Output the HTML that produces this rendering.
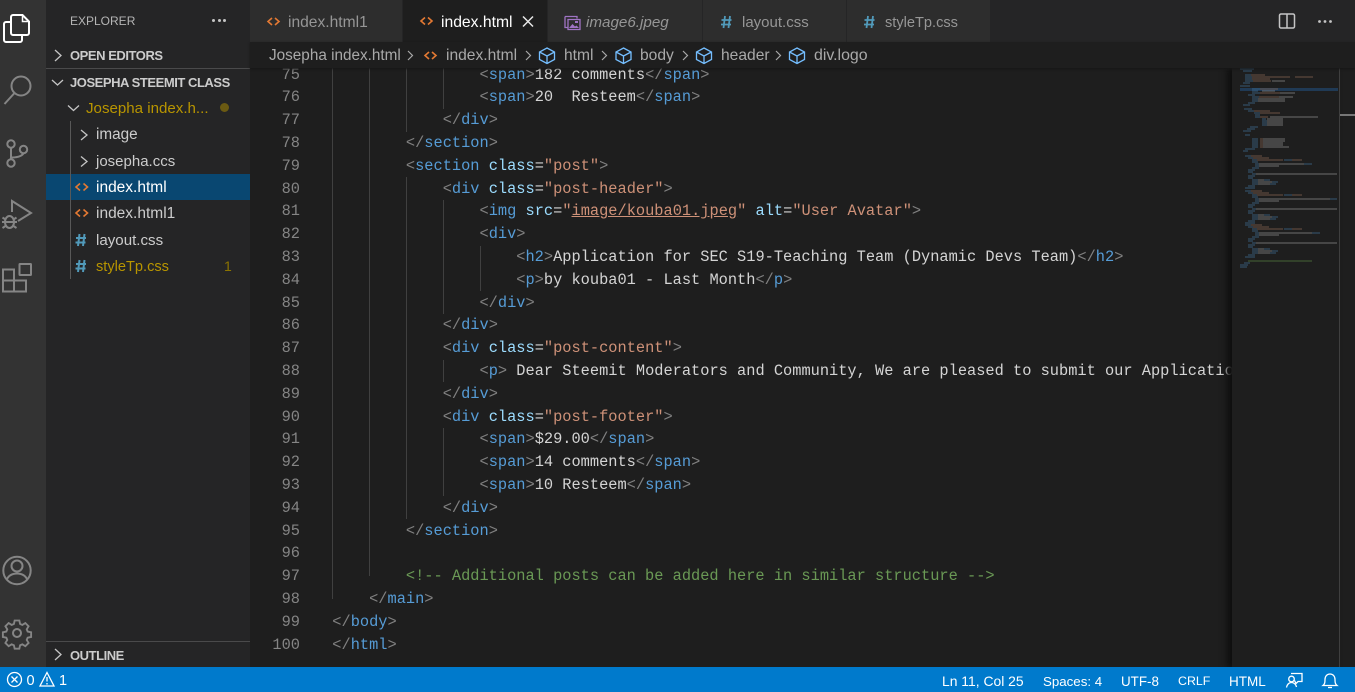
<!DOCTYPE html>
<html lang="en"><head><meta charset="utf-8"><title>index.html</title>
<style>
*{margin:0;padding:0;box-sizing:border-box}
html,body{width:1355px;height:692px;overflow:hidden;background:#1e1e1e}
body{position:relative;font-family:"Liberation Sans",sans-serif;color:#ccc}
.a{position:absolute;white-space:pre}
.box{position:absolute}
svg{position:absolute;overflow:visible}
#code,#nums{font-family:"Liberation Mono",monospace;font-size:15.33px;line-height:22.8px;white-space:pre}
#code{position:absolute;left:332.3px;top:63.6px;color:#d4d4d4}
#nums{position:absolute;left:250px;width:50px;top:63.6px;text-align:right;color:#858585}
#code div,#nums div{height:22.8px}
i{font-style:normal}
.b{color:#808080}.t{color:#569cd6}.n{color:#9cdcfe}.s{color:#ce9178}.c{color:#6a9955}
.g{position:absolute;width:1px;background:#404040}
.side{font-size:15.3px;line-height:26px;height:26px}
.head{font-size:13px;letter-spacing:-.45px;font-weight:bold;line-height:20px;color:#cccccc}
.tab{position:absolute;top:0;height:42px}
.tl{font-size:15.6px;line-height:42px;top:2px;color:#969696}
.st{font-size:13.7px;line-height:25px;top:669px;color:#fff}
.cr{font-size:15.6px;line-height:26px;top:43px;color:#a9a9a9}
</style></head>
<body>
<!-- editor -->
<div class="box" style="left:250px;top:42px;width:1105px;height:626px;background:#1e1e1e"></div>
<div class="g" style="left:332px;top:64px;height:535px"></div>
<div class="g" style="left:369px;top:64px;height:512px"></div>
<div class="g" style="left:406px;top:64px;height:68px"></div>
<div class="g" style="left:406px;top:177px;height:342px"></div>
<div class="g" style="left:443px;top:64px;height:45px"></div>
<div class="g" style="left:443px;top:200px;height:114px"></div>
<div class="g" style="left:443px;top:360px;height:22px"></div>
<div class="g" style="left:443px;top:428px;height:68px"></div>
<div class="g" style="left:480px;top:246px;height:45px"></div>
<div id="nums"><div>75</div><div>76</div><div>77</div><div>78</div><div>79</div><div>80</div><div>81</div><div>82</div><div>83</div><div>84</div><div>85</div><div>86</div><div>87</div><div>88</div><div>89</div><div>90</div><div>91</div><div>92</div><div>93</div><div>94</div><div>95</div><div>96</div><div>97</div><div>98</div><div>99</div><div>100</div></div>
<div id="code" style="width:900px;height:600px;overflow:hidden"><div>                <i class="b">&lt;</i><i class="t">span</i><i class="b">&gt;</i>182 comments<i class="b">&lt;/</i><i class="t">span</i><i class="b">&gt;</i></div><div>                <i class="b">&lt;</i><i class="t">span</i><i class="b">&gt;</i>20  Resteem<i class="b">&lt;/</i><i class="t">span</i><i class="b">&gt;</i></div><div>            <i class="b">&lt;/</i><i class="t">div</i><i class="b">&gt;</i></div><div>        <i class="b">&lt;/</i><i class="t">section</i><i class="b">&gt;</i></div><div>        <i class="b">&lt;</i><i class="t">section</i> <i class="n">class</i>=<i class="s">"post"</i><i class="b">&gt;</i></div><div>            <i class="b">&lt;</i><i class="t">div</i> <i class="n">class</i>=<i class="s">"post-header"</i><i class="b">&gt;</i></div><div>                <i class="b">&lt;</i><i class="t">img</i> <i class="n">src</i>=<i class="s">"<u>image/kouba01.jpeg</u>"</i> <i class="n">alt</i>=<i class="s">"User Avatar"</i><i class="b">&gt;</i></div><div>                <i class="b">&lt;</i><i class="t">div</i><i class="b">&gt;</i></div><div>                    <i class="b">&lt;</i><i class="t">h2</i><i class="b">&gt;</i>Application for SEC S19-Teaching Team (Dynamic Devs Team)<i class="b">&lt;/</i><i class="t">h2</i><i class="b">&gt;</i></div><div>                    <i class="b">&lt;</i><i class="t">p</i><i class="b">&gt;</i>by kouba01 - Last Month<i class="b">&lt;/</i><i class="t">p</i><i class="b">&gt;</i></div><div>                <i class="b">&lt;/</i><i class="t">div</i><i class="b">&gt;</i></div><div>            <i class="b">&lt;/</i><i class="t">div</i><i class="b">&gt;</i></div><div>            <i class="b">&lt;</i><i class="t">div</i> <i class="n">class</i>=<i class="s">"post-content"</i><i class="b">&gt;</i></div><div>                <i class="b">&lt;</i><i class="t">p</i><i class="b">&gt;</i> Dear Steemit Moderators and Community, We are pleased to submit our Application</div><div>            <i class="b">&lt;/</i><i class="t">div</i><i class="b">&gt;</i></div><div>            <i class="b">&lt;</i><i class="t">div</i> <i class="n">class</i>=<i class="s">"post-footer"</i><i class="b">&gt;</i></div><div>                <i class="b">&lt;</i><i class="t">span</i><i class="b">&gt;</i>$29.00<i class="b">&lt;/</i><i class="t">span</i><i class="b">&gt;</i></div><div>                <i class="b">&lt;</i><i class="t">span</i><i class="b">&gt;</i>14 comments<i class="b">&lt;/</i><i class="t">span</i><i class="b">&gt;</i></div><div>                <i class="b">&lt;</i><i class="t">span</i><i class="b">&gt;</i>10 Resteem<i class="b">&lt;/</i><i class="t">span</i><i class="b">&gt;</i></div><div>            <i class="b">&lt;/</i><i class="t">div</i><i class="b">&gt;</i></div><div>        <i class="b">&lt;/</i><i class="t">section</i><i class="b">&gt;</i></div><div> </div><div>        <i class="c">&lt;!-- Additional posts can be added here in similar structure --&gt;</i></div><div>    <i class="b">&lt;/</i><i class="t">main</i><i class="b">&gt;</i></div><div><i class="b">&lt;/</i><i class="t">body</i><i class="b">&gt;</i></div><div><i class="b">&lt;/</i><i class="t">html</i><i class="b">&gt;</i></div></div>

<!-- minimap -->
<div class="box" style="left:1232px;top:68px;width:107px;height:600px;background:#1e1e1e;box-shadow:-5px 0 6px #0f0f0f"></div>
<div class="box" style="left:1240px;top:88px;width:98px;height:3px;background:#203a55"></div>
<div class="box" style="left:1339px;top:68px;width:1px;height:600px;background:#3f3f3f"></div>
<div class="box" style="left:1340px;top:114px;width:15px;height:2px;background:#777"></div>
<svg width="1355" height="692" style="left:0;top:0;opacity:.72" fill="none" stroke-width="1.100">
<path stroke="#3f6f96" d="M1240 69h14M1243 71h9M1245 75h6M1245 77h7M1245 79h7M1245 81h8M1243 83h7M1240 86h10M1252 89h8M1252 91h6M1252 93h8M1248 95h7M1252 97h7M1252 99h6M1252 101h6M1248 103h7M1243 105h7M1244 109h8M1248 111h6M1254 113h6M1255 115h5M1255 117h5M1262 119h4M1262 121h5M1262 123h5M1262 125h5M1250 127h8M1247 129h8M1243 131h8M1245 135h5M1252 139h6M1252 141h6M1252 143h6M1252 145h6M1252 147h6M1245 149h10M1243 151h5"/>
<path stroke="#8a6553" d="M1251 75h14M1252 77h38M1295 77h18M1252 79h18M1253 81h18M1260 89h18M1260 93h20M1259 97h20M1254 111h16M1260 113h20M1260 117h8M1260 139h3M1260 141h3M1260 143h3M1260 145h3M1260 147h3"/>
<path stroke="#8f8f8f" d="M1272 81h13M1262 91h13M1280 93h15M1279 97h14M1258 99h27M1258 101h27M1270 117h48M1267 119h16M1267 121h16M1267 123h16M1267 125h16M1263 139h22M1263 141h22M1263 143h20M1263 145h20M1263 147h26"/>
<g transform="translate(0 155)"><path stroke="#3f6f96" d="M1245 1h6M1248 3h5M1252 5h5M1284 5h8M1252 7h6M1255 9h4M1304 9h8M1255 11h4M1252 13h7M1248 15h7M1248 17h5M1252 19h4M1248 21h7M1248 23h5M1252 25h6M1264 25h6M1252 27h6M1272 27h6M1252 29h6M1270 29h6M1248 31h7M1245 33h10"/><path stroke="#8a6553" d="M1251 1h11M1253 3h16M1257 5h26M1292 5h10"/><path stroke="#8f8f8f" d="M1259 9h45M1259 11h20M1256 19h81M1258 25h6M1258 27h14M1258 29h12"/></g>
<g transform="translate(0 190)"><path stroke="#3f6f96" d="M1245 1h6M1248 3h5M1252 5h5M1284 5h8M1252 7h6M1255 9h4M1330 9h7M1255 11h4M1252 13h7M1248 15h7M1248 17h5M1252 19h4M1248 21h7M1248 23h5M1252 25h6M1264 25h6M1252 27h6M1272 27h6M1252 29h6M1270 29h6M1248 31h7M1245 33h10"/><path stroke="#8a6553" d="M1251 1h11M1253 3h16M1257 5h26M1292 5h10"/><path stroke="#8f8f8f" d="M1259 9h71M1259 11h20M1256 19h81M1258 25h6M1258 27h14M1258 29h12"/></g>
<g transform="translate(0 224)"><path stroke="#3f6f96" d="M1245 1h6M1248 3h5M1252 5h5M1284 5h8M1252 7h6M1255 9h4M1312 9h8M1255 11h4M1252 13h7M1248 15h7M1248 17h5M1252 19h4M1248 21h7M1248 23h5M1252 25h6M1264 25h6M1252 27h6M1272 27h6M1252 29h6M1270 29h6M1248 31h7M1245 33h10"/><path stroke="#8a6553" d="M1251 1h11M1253 3h16M1257 5h26M1292 5h10"/><path stroke="#8f8f8f" d="M1259 9h53M1259 11h20M1256 19h81M1258 25h6M1258 27h14M1258 29h12"/></g>
<path stroke="#55803f" d="M1248 261h64"/>
<path stroke="#3f6f96" d="M1244 263h6M1240 265h8M1240 267h7"/>
</svg>

<!-- activity bar -->
<div class="box" style="left:0;top:0;width:46px;height:668px;background:#333"></div>
<svg width="46" height="668" style="left:0;top:0" fill="none">
<path stroke="#fff" stroke-width="2" d="M22 35v5a2 2 0 0 1-2 2H6a2 2 0 0 1-2-2V24a2 2 0 0 1 2-2h5"/>
<path stroke="#fff" stroke-width="2" d="M13 15h9.500L29 21.500V33a2 2 0 0 1-2 2H13a2 2 0 0 1-2-2V17a2 2 0 0 1 2-2z"/>
<path stroke="#fff" stroke-width="1.500" d="M22.500 15v6.500H29"/>
<g stroke="#858585" stroke-width="2">
<circle cx="21" cy="86" r="9.500"/><path d="M14.500 93 4.500 104"/>
<circle cx="11" cy="144" r="3.700"/><circle cx="11" cy="163" r="3.700"/><circle cx="23.500" cy="149.500" r="3.700"/>
<path d="M11 148v11.500M11.500 157.500c8 0 11.500-2.500 12-4.500"/>
<path d="M12 212v-11L31 213 18 221"/>
<ellipse cx="9.500" cy="222" rx="4.500" ry="6"/><path d="M2.500 217.500l3 2M16.500 217.500l-3 2M2 222h3M14 222h3M2.500 228l3-2M16.500 228l-3-2M5.500 222h8"/>
<path d="M3 269.500h11v22H3zM3 280.500h23v11H14M26 280.500v-1M14 269.500v22"/>
<path d="M26 280.500v11"/>
<rect x="19.500" y="264" width="11.500" height="11" rx=".5"/>
<circle cx="17" cy="570.500" r="13.700"/><circle cx="17" cy="566" r="5.500"/><path d="M6.500 580c2-4.500 6-6.500 10.500-6.500s8.500 2 10.500 6.500"/>
<circle cx="17" cy="633" r="4"/>
<path transform="translate(1.100 40.800) scale(.935)" d="M14.500 620h5l.8 3.700 2.400 1 3.200-2 3.500 3.500-2 3.200 1 2.400 3.700.8v5l-3.700.8-1 2.400 2 3.200-3.500 3.500-3.200-2-2.400 1-.8 3.700h-5l-.8-3.700-2.400-1-3.200 2-3.500-3.500 2-3.200-1-2.400-3.700-.8v-5l3.700-.8 1-2.400-2-3.200 3.500-3.500 3.200 2 2.400-1z"/>
</g>
</svg>

<!-- sidebar -->
<div class="box" style="left:46px;top:0;width:204px;height:668px;background:#252526"></div>
<div class="a" style="left:70px;top:12px;font-size:12px;line-height:18px;color:#b5b5b5">EXPLORER</div>
<div class="box" style="left:212px;top:19px;width:3px;height:3px;background:#c5c5c5;border-radius:2px"></div>
<div class="box" style="left:217.500px;top:19px;width:3px;height:3px;background:#c5c5c5;border-radius:2px"></div>
<div class="box" style="left:223px;top:19px;width:3px;height:3px;background:#c5c5c5;border-radius:2px"></div>
<div class="a head" style="left:70px;top:46px">OPEN EDITORS</div>
<div class="box" style="left:46px;top:68px;width:204px;height:1px;background:#4a4a4b"></div>
<div class="a head" style="left:70px;top:73px">JOSEPHA STEEMIT CLASS</div>
<div class="a side" style="left:86px;top:96px;color:#b89500;font-size:15.1px">Josepha index.h...</div>
<div class="box" style="left:220px;top:103px;width:9px;height:9px;border-radius:50%;background:#6b5a12"></div>
<div class="box" style="left:46px;top:174px;width:204px;height:26px;background:#094771"></div>
<div class="box" style="left:70px;top:121px;width:1px;height:158px;background:#585858"></div>
<div class="a side" style="left:96px;top:122px">image</div>
<div class="a side" style="left:96px;top:149px;font-size:15px">josepha.ccs</div>
<div class="a side" style="left:96px;top:175px;color:#fff;font-size:15.5px">index.html</div>
<div class="a side" style="left:96px;top:201px;font-size:15.5px">index.html1</div>
<div class="a side" style="left:96px;top:228px;font-size:15.1px">layout.css</div>
<div class="a side" style="left:96px;top:254px;color:#b89500;font-size:14.6px">styleTp.css</div>
<div class="a side" style="left:224px;top:253px;font-size:14px;color:#8c7400">1</div>
<div class="box" style="left:46px;top:641px;width:204px;height:1px;background:#4a4a4b"></div>
<div class="a head" style="left:70px;top:646px">OUTLINE</div>
<svg width="250" height="668" style="left:0;top:0" fill="none" stroke-width="1.300">
<g stroke="#c5c5c5">
<path d="M55 50l6 5.500-6 5.500M52 80l5.500 5 5.500-5M68 105.500l5.500 5 5.500-5M81 130l6 5-6 5M81 156.500l6 5-6 5M55 649l6 5.500-6 5.500"/>
</g>
<g stroke="#e37933" stroke-width="1.600"><path d="M80 183.500l-4 3.500 4 3.500M83.500 183.500l4 3.500-4 3.500M80 209.500l-4 3.500 4 3.500M83.500 209.500l4 3.500-4 3.500"/></g>
<g stroke="#519aba" stroke-width="2"><path d="M79.500 234l-1.500 12M84.500 234l-1.500 12M76 238h10M75.500 242.500h10M79.500 260l-1.500 12M84.500 260l-1.500 12M76 264h10M75.500 268.500h10"/></g>
</svg>

<!-- tabs -->
<div class="box" style="left:250px;top:0;width:1105px;height:42px;background:#252526"></div>
<div class="tab" style="left:250px;width:152px;background:#2d2d2d"></div>
<div class="tab" style="left:403px;width:144px;background:#1e1e1e"></div>
<div class="tab" style="left:548px;width:154px;background:#2d2d2d"></div>
<div class="tab" style="left:703px;width:143px;background:#2d2d2d"></div>
<div class="tab" style="left:847px;width:143px;background:#2d2d2d"></div>
<div class="a tl" style="left:288px">index.html1</div>
<div class="a tl" style="left:441px;color:#fff;font-size:15.7px">index.html</div>
<div class="a tl" style="left:586px;font-style:italic;font-size:15.2px">image6.jpeg</div>
<div class="a tl" style="left:742px;font-size:15px">layout.css</div>
<div class="a tl" style="left:885px;font-size:14.6px">styleTp.css</div>
<svg width="1355" height="42" style="left:0;top:0" fill="none">
<g stroke="#e37933" stroke-width="1.600"><path d="M272 18l-4 3.500 4 3.500M275 18l4 3.500-4 3.500M425 17.500l-4 3.500 4 3.500M428 17.500l4 3.500-4 3.500"/></g>
<path stroke="#e8e8e8" stroke-width="1.500" d="M523 16.500l10 10M533 16.500l-10 10"/>
<path stroke="#a074c4" stroke-width="1.300" d="M565 16.500h12v2M565 16.500v11h3M568 19.500h12v10h-12z"/>
<path fill="#a074c4" d="M569 28l3.500-4 2.500 2.500 1.500-1 2.500 2.500zM575 21h3v2h-3z"/>
<g stroke="#519aba" stroke-width="1.800"><path d="M725 16l-1.500 12M730 16l-1.500 12M721.500 20h10M721 24.500h10M868 16l-1.500 12M873 16l-1.500 12M864.500 20h10M864 24.500h10"/></g>
<rect x="1279.500" y="14" width="15" height="14" rx="1.500" stroke="#c5c5c5" stroke-width="1.500"/><path stroke="#c5c5c5" stroke-width="1.500" d="M1287 14v14"/>
<g fill="#c5c5c5"><circle cx="1319.500" cy="21.500" r="1.400"/><circle cx="1325" cy="21.500" r="1.400"/><circle cx="1330.500" cy="21.500" r="1.400"/></g>
</svg>

<!-- breadcrumb -->
<div class="box" style="left:250px;top:42px;width:1105px;height:26px;background:#1e1e1e;box-shadow:0 1px 2px #161616"></div>
<div class="a cr" style="left:269px;font-size:15.3px">Josepha index.html</div>
<div class="a cr" style="left:446px">index.html</div>
<div class="a cr" style="left:564px">html</div>
<div class="a cr" style="left:640px">body</div>
<div class="a cr" style="left:721px">header</div>
<div class="a cr" style="left:814px;font-size:15.9px">div.logo</div>
<svg width="1355" height="70" style="left:0;top:0" fill="none">
<path stroke="#a9a9a9" stroke-width="1.200" d="M408 51l4.500 4.500-4.500 4.500M526 51l4.500 4.500-4.500 4.500M602 51l4.500 4.500-4.500 4.500M683 51l4.500 4.500-4.500 4.500M776 51l4.500 4.500-4.500 4.500"/>
<g stroke="#e37933" stroke-width="1.600"><path d="M429 52l-4 3.500 4 3.500M432 52l4 3.500-4 3.500"/></g>
<g stroke="#75beff" stroke-width="1.300">
<path d="M547 48l7.500 4v7.500l-7.500 4-7.500-4V52zM539.500 52l7.500 4 7.500-4M547 56v7.500"/>
<path transform="translate(76.500 0)" d="M547 48l7.500 4v7.500l-7.500 4-7.500-4V52zM539.500 52l7.500 4 7.500-4M547 56v7.500"/>
<path transform="translate(157 0)" d="M547 48l7.500 4v7.500l-7.500 4-7.500-4V52zM539.500 52l7.500 4 7.500-4M547 56v7.500"/>
<path transform="translate(250 0)" d="M547 48l7.500 4v7.500l-7.500 4-7.500-4V52zM539.500 52l7.500 4 7.500-4M547 56v7.500"/>
</g>
</svg>

<!-- status bar -->
<div class="box" style="left:0;top:667px;width:1355px;height:25px;background:#007acc"></div>
<div class="a st" style="left:26.500px;font-size:14.5px">0</div>
<div class="a st" style="left:59px;font-size:14.5px">1</div>
<div class="a st" style="left:942px;font-size:13.9px">Ln 11, Col 25</div>
<div class="a st" style="left:1043px;font-size:13.3px">Spaces: 4</div>
<div class="a st" style="left:1121px;font-size:13.4px">UTF-8</div>
<div class="a st" style="left:1178px;font-size:12.4px">CRLF</div>
<div class="a st" style="left:1229px;font-size:13.5px">HTML</div>
<svg width="1355" height="692" style="left:0;top:0" fill="none" stroke="#fff" stroke-width="1.300">
<circle cx="14.500" cy="679.500" r="7"/><path d="M11.500 676.500l6 6M17.500 676.500l-6 6"/>
<path d="M47 672.500l7 13.500H40zM47 677v4.500M47 683v1.500"/>
<path d="M1291 673.500h11v8h-4l-2 2-1.500-3"/><circle cx="1291.500" cy="679" r="2.800"/><path d="M1286.500 687.500c.5-3 2.500-5 5-5s4.500 2 5 4.500"/>
<path d="M1337 685.500h-14c1.800-1.500 2-3 2-6 0-3 1.800-5.500 5-5.500s5 2.500 5 5.500c0 3 .2 4.500 2 6zM1328 687.500h4"/>
</svg>
</body></html>
